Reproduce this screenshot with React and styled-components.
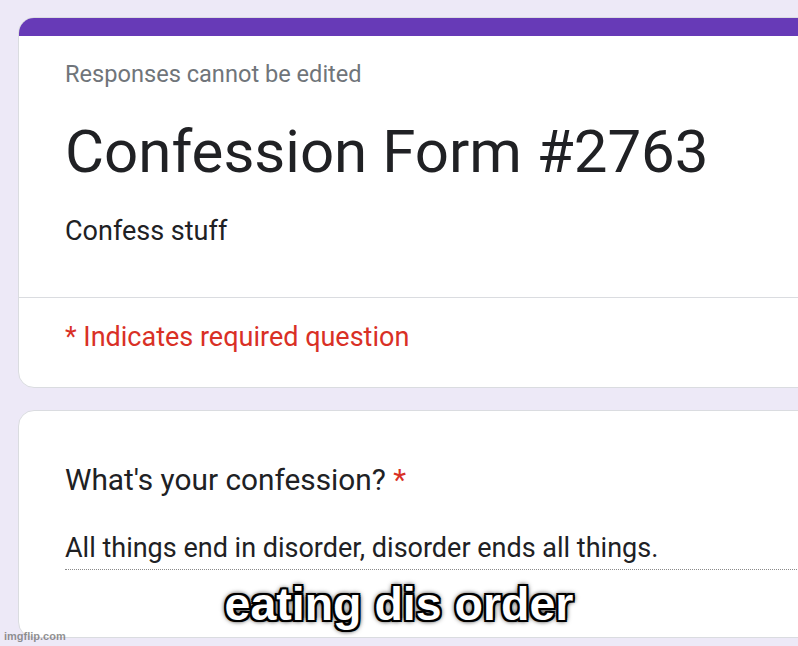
import styled, { createGlobalStyle } from 'styled-components';

const GlobalStyle = createGlobalStyle`
  html, body {
    margin: 0;
    padding: 0;
    background: #ede9f7;
    overflow: hidden;
  }
  body {
    font-family: Roboto, "Liberation Sans", Arial, sans-serif;
    color: #202124;
  }
`;

const Page = styled.div`
  position: relative;
  width: 798px;
  height: 646px;
  padding: 17px 0 0 18px;
  box-sizing: border-box;
  display: flex;
  flex-direction: column;
  gap: 22px;
`;

const Card = styled.section`
  width: 820px;
  background: #fff;
  border: 1px solid #dadce0;
  border-radius: 16px;
  overflow: hidden;
  flex-shrink: 0;
`;

const TopBar = styled.div`
  height: 19px;
  margin: -1px -1px 0;
  background: #673ab7;
`;

const Section = styled.div`
  padding: ${p => p.$pad};
  padding-left: 46px;
  border-bottom: ${p => (p.$divider ? '1px solid #dadce0' : 'none')};
`;

const Note = styled.div`
  font-size: 23.6px;
  line-height: 28px;
  color: #70757a;
`;

const Title = styled.h1`
  margin: 26px 0 0;
  font-size: 60px;
  line-height: 76px;
  font-weight: 400;
  color: #202124;
`;

const Description = styled.p`
  margin: 25px 0 0;
  font-size: 27px;
  line-height: 32px;
`;

const Required = styled.div`
  font-size: 27px;
  line-height: 32px;
  color: #d93025;
`;

const Question = styled.div`
  font-size: 29.8px;
  line-height: 34px;
`;

const Star = styled.span`
  color: #d93025;
`;

const Answer = styled.div`
  margin-top: 36px;
  padding-bottom: 6px;
  font-size: 27px;
  line-height: 30px;
  border-bottom: 1px dotted #8a8a8a;
`;

const Caption = styled.div`
  position: absolute;
  left: 0;
  right: 0;
  top: 578px;
  text-align: center;
  font-family: "Liberation Sans", Arial, sans-serif;
  font-weight: 700;
  font-size: 46.5px;
  line-height: 52px;
  color: #fff;
  text-shadow:
    2px 2px 0 #000, -2px -2px 0 #000, 2px -2px 0 #000, -2px 2px 0 #000,
    0 2px 0 #000, 0 -2px 0 #000, 2px 0 0 #000, -2px 0 0 #000,
    0 0 5px #000, 0 0 6px #000;
`;

const Watermark = styled.div`
  position: absolute;
  left: 4px;
  bottom: 4px;
  font-family: "Liberation Sans", Arial, sans-serif;
  font-weight: 700;
  font-size: 11px;
  color: rgba(110, 110, 110, 0.75);
`;

export default function App() {
  return (
    <>
      <GlobalStyle />
      <Page>
        <Card>
          <TopBar />
          <Section $pad="24px 0 50px" $divider>
            <Note>Responses cannot be edited</Note>
            <Title>Confession Form #2763</Title>
            <Description>Confess stuff</Description>
          </Section>
          <Section $pad="23px 0 34px">
            <Required>* Indicates required question</Required>
          </Section>
        </Card>
        <Card>
          <Section $pad="52px 0 67px">
            <Question>
              What's your confession? <Star>*</Star>
            </Question>
            <Answer>All things end in disorder, disorder ends all things.</Answer>
          </Section>
        </Card>
        <Caption>eating dis order</Caption>
        <Watermark>imgflip.com</Watermark>
      </Page>
    </>
  );
}
